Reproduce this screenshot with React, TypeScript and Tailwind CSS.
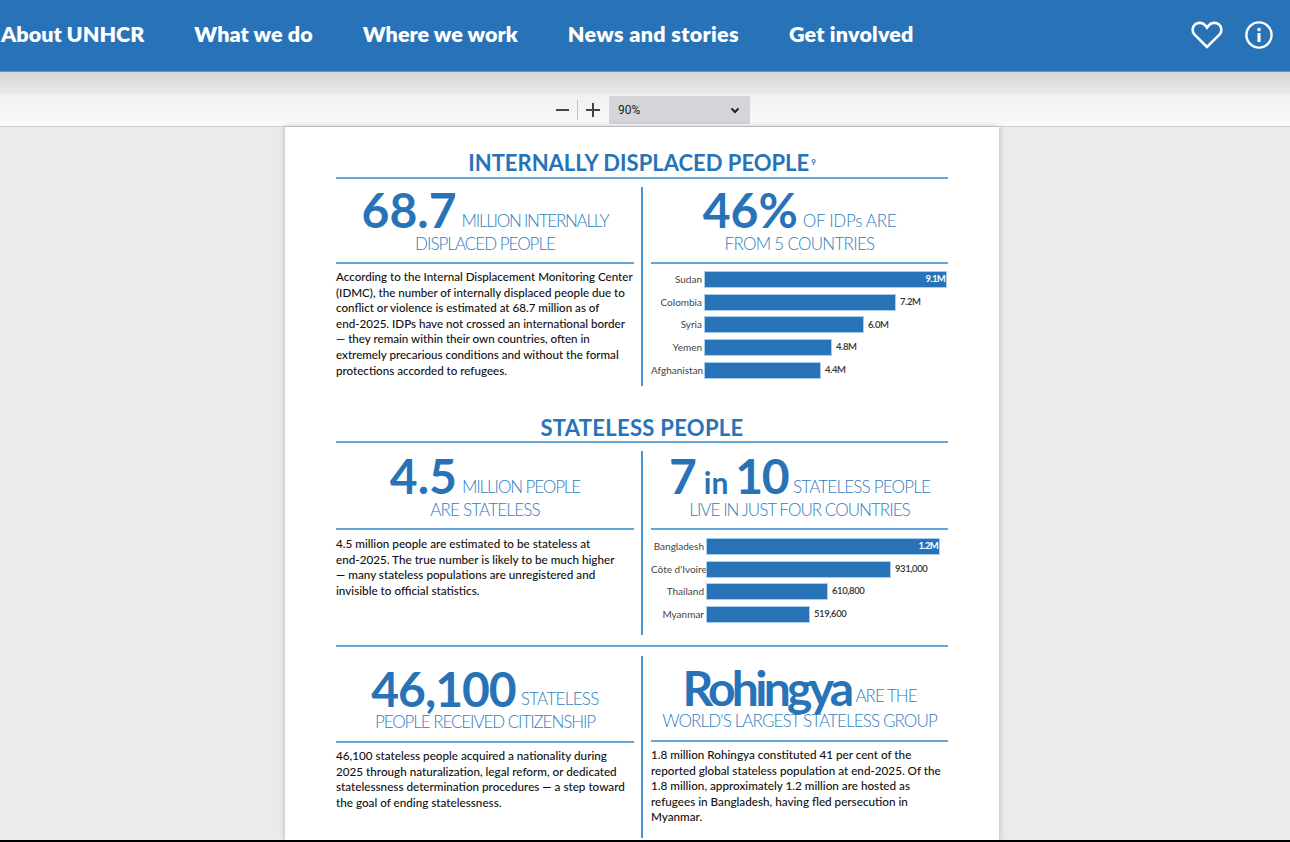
import React from "react";

const navItems = [
  { label: "About UNHCR", cls: "" },
  { label: "What we do", cls: "tracking-[0.1px]" },
  { label: "Where we work", cls: "tracking-[0.05px]" },
  { label: "News and stories", cls: "tracking-[0.34px]" },
  { label: "Get involved", cls: "tracking-[0.2px]" },
];

type Bar = { label: string; value: string; width: number; inside?: boolean };

const idpBars: Bar[] = [
  { label: "Sudan", value: "9.1M", width: 243, inside: true },
  { label: "Colombia", value: "7.2M", width: 192 },
  { label: "Syria", value: "6.0M", width: 160 },
  { label: "Yemen", value: "4.8M", width: 128 },
  { label: "Afghanistan", value: "4.4M", width: 117 },
];

const statelessBars: Bar[] = [
  { label: "Bangladesh", value: "1.2M", width: 234, inside: true },
  { label: "Côte d'Ivoire", value: "931,000", width: 185 },
  { label: "Thailand", value: "610,800", width: 122 },
  { label: "Myanmar", value: "519,600", width: 104 },
];

const Rule = () => <div className="h-[2px] bg-[#64a6d8]" />;

const Title = ({ children, className }: { children: React.ReactNode; className: string }) => (
  <h2 className={`h-[26px] text-center text-[22px] font-bold text-[#2873b8] ${className}`}>{children}</h2>
);

const Stat = ({
  big,
  small,
  line,
  className,
  bigClass = "",
  smallClass,
  lineClass,
}: {
  big: React.ReactNode;
  small: string;
  line: string;
  className: string;
  bigClass?: string;
  smallClass: string;
  lineClass: string;
}) => (
  <div className={`flex flex-col justify-end text-[#2f7dbe] ${className}`}>
    <div className="flex shrink-0 items-baseline justify-center gap-[5px] whitespace-nowrap">
      <span className={`text-[48px] leading-[44px] font-bold text-[#2873b8] ${bigClass}`}>{big}</span>
      <span className={`text-[17px] leading-[20px] font-light ${smallClass}`}>{small}</span>
    </div>
    <div className={`h-[30px] shrink-0 text-center text-[17px] leading-[22px] font-light whitespace-nowrap ${lineClass}`}>
      {line}
    </div>
  </div>
);

const Body = ({ lines, className }: { lines: string[]; className: string }) => (
  <p className={`leading-[15.6px] font-medium whitespace-nowrap text-[#111] ${className}`}>
    {lines.map((l) => (
      <span key={l} className="block">
        {l}
      </span>
    ))}
  </p>
);

const Chart = ({ bars, labelWidth, className }: { bars: Bar[]; labelWidth: string; className: string }) => (
  <div className={`flex flex-col ${className}`}>
    {bars.map((b) => (
      <div key={b.label} className="flex h-[17px] items-center">
        <span className={`text-right text-[10px] whitespace-nowrap text-[#444] ${labelWidth}`}>{b.label}</span>
        <div
          className="ml-[2px] flex h-[17px] items-center justify-end border border-[#a9cfea] bg-[#2873b8] pr-[1px]"
          style={{ width: b.width }}
        >
          {b.inside && <span className="text-[9.5px] font-bold tracking-[-0.7px] text-white">{b.value}</span>}
        </div>
        {!b.inside && <span className="ml-[4px] text-[9.5px] font-semibold tracking-[-0.4px] text-[#333]">{b.value}</span>}
      </div>
    ))}
  </div>
);

const Row = ({ left, right, className }: { left: React.ReactNode; right: React.ReactNode; className: string }) => (
  <div className={`flex ${className}`}>
    <div className="w-[298px]">{left}</div>
    <div className="mx-[7px] w-[2px] bg-[#4a94cf]" />
    <div className="ml-px w-[297px]">{right}</div>
  </div>
);

export default function App() {
  return (
    <div className="flex h-[842px] w-full flex-col overflow-hidden bg-[#ebebed] font-['Lato',sans-serif]">
      <header className="flex h-[72px] shrink-0 items-center border-b border-[#5a9bd2] bg-[#2873b8] pb-px">
        <nav className="mb-[2px] flex flex-1 gap-[50px] pl-px">
          {navItems.map((n) => (
            <a key={n.label} className={`text-[21.5px] font-extrabold whitespace-nowrap text-white ${n.cls}`}>
              {n.label}
            </a>
          ))}
        </nav>
        <div className="flex items-center gap-[22px] pr-[17px]">
          <svg width="32" height="28" viewBox="0 0 32 28" fill="none" stroke="white" strokeWidth="2.6" strokeLinejoin="miter">
            <path d="M16 26 3.6 13.6C.6 10.4 1.2 6 4 3.6 7 1 11.6 1.4 14 4.2L16 6.6l2-2.4c2.4-2.8 7-3.2 10-.6 2.800 2.400 3.400 6.800.4 10z" />
          </svg>
          <svg width="28" height="28" viewBox="0 0 28 28" fill="none">
            <circle cx="14" cy="14" r="12.6" stroke="white" strokeWidth="2.4" />
            <circle cx="14" cy="8.600" r="1.800" fill="white" />
            <rect x="12.500" y="12" width="3" height="9" fill="white" />
          </svg>
        </div>
      </header>

      <div className="flex h-[55px] shrink-0 items-center justify-center border-b border-[#cfcfcf] bg-[linear-gradient(#d6d6d6_0,#e9e9e9_22px,#f0f0f0_22px,#fafafa_100%)] pt-[24px] pb-[2px] pl-[16px]">
        <span className="h-[2px] w-[13px] bg-[#444]" />
        <span className="mx-[8px] h-[20px] w-px bg-[#c4c4c4]" />
        <span className="relative h-[14px] w-[14px]">
          <span className="absolute top-[6px] left-0 h-[2px] w-[14px] bg-[#444]" />
          <span className="absolute top-0 left-[6px] h-[14px] w-[2px] bg-[#444]" />
        </span>
        <div className="ml-[9px] flex h-[28px] w-[141px] items-center justify-between rounded-[2px] bg-[#d5d5d9] pr-[10px] pl-[9px] font-['Roboto',sans-serif] text-[12px] text-[#222]">
          90%
          <svg width="10" height="7" viewBox="0 0 10 7" fill="none" stroke="#222" strokeWidth="2">
            <path d="m1.500 1.500 3.500 3.500 3.500-3.500" />
          </svg>
        </div>
      </div>

      <main className="flex min-h-0 flex-1 justify-center pr-[6px]">
        <article className="h-full w-[714px] bg-white px-[51px] pt-[24px] shadow-[0_0_6px_rgba(0,0,0,0.25)]">
          <Title className="leading-[24px]">
            INTERNALLY DISPLACED PEOPLE<span className="relative -top-[6px] ml-[2px] text-[8px]">9</span>
          </Title>
          <Rule />
          <Row
            className="mt-[8px] h-[199px]"
            left={
              <>
                <Stat
                  className="h-[75px]"
                  big="68.7"
                  small="MILLION INTERNALLY"
                  smallClass="-translate-y-px tracking-[-1.25px]"
                  line="DISPLACED PEOPLE"
                  lineClass="translate-y-px tracking-[-1px]"
                />
                <Rule />
                <Body
                  className="pt-[5px] text-[11.6px]"
                  lines={[
                    "According to the Internal Displacement Monitoring Center",
                    "(IDMC), the number of internally displaced people due to",
                    "conflict or violence is estimated at 68.7 million as of",
                    "end-2025. IDPs have not crossed an international border",
                    "— they remain within their own countries, often in",
                    "extremely precarious conditions and without the formal",
                    "protections accorded to refugees.",
                  ]}
                />
              </>
            }
            right={
              <>
                <Stat
                  className="h-[75px]"
                  big="46%"
                  small="OF IDPs ARE"
                  smallClass="-translate-y-px tracking-[-0.3px]"
                  line="FROM 5 COUNTRIES"
                  lineClass="translate-y-px tracking-[-0.72px]"
                />
                <Rule />
                <Chart className="gap-[5.7px] pt-[7px]" bars={idpBars} labelWidth="w-[51px]" />
              </>
            }
          />

          <div className="mt-[29px]">
            <Title className="leading-[26px] tracking-[0.3px]">STATELESS PEOPLE</Title>
          </div>
          <Rule />
          <Row
            className="mt-[8px] h-[184px]"
            left={
              <>
                <Stat
                  className="h-[77px]"
                  big="4.5"
                  small="MILLION PEOPLE"
                  smallClass="-translate-y-px tracking-[-1.1px]"
                  line="ARE STATELESS"
                  lineClass="translate-y-px tracking-[-0.8px]"
                />
                <Rule />
                <Body
                  className="pt-[6px] text-[11.7px]"
                  lines={[
                    "4.5 million people are estimated to be stateless at",
                    "end-2025. The true number is likely to be much higher",
                    "— many stateless populations are unregistered and",
                    "invisible to official statistics.",
                  ]}
                />
              </>
            }
            right={
              <>
                <Stat
                  className="h-[77px]"
                  big={
                    <>
                      7<span className="mx-[7px] text-[30px] leading-[20px]">in</span>
                      <span className="tracking-[-1.5px]">10</span>
                    </>
                  }
                  small="STATELESS PEOPLE"
                  smallClass="-translate-y-px tracking-[-0.8px]"
                  line="LIVE IN JUST FOUR COUNTRIES"
                  lineClass="translate-y-px tracking-[-0.95px]"
                />
                <Rule />
                <Chart className="gap-[5.5px] pt-[8px]" bars={statelessBars} labelWidth="w-[53px]" />
              </>
            }
          />

          <div className="mt-[10px]">
            <Rule />
          </div>
          <Row
            className="mt-[9px] h-[182px]"
            left={
              <>
                <Stat
                  className="h-[85px]"
                  big="46,100"
                  bigClass="tracking-[-1px]"
                  small="STATELESS"
                  smallClass="-translate-y-[2px] tracking-[-0.67px]"
                  line="PEOPLE RECEIVED CITIZENSHIP"
                  lineClass="tracking-[-1.08px]"
                />
                <Rule />
                <Body
                  className="pt-[5px] text-[11.7px]"
                  lines={[
                    "46,100 stateless people acquired a nationality during",
                    "2025 through naturalization, legal reform, or dedicated",
                    "statelessness determination procedures — a step toward",
                    "the goal of ending statelessness.",
                  ]}
                />
              </>
            }
            right={
              <>
                <Stat
                  className="h-[84px]"
                  big="Rohingya"
                  bigClass="tracking-[-3.7px]"
                  small="ARE THE"
                  smallClass="-translate-y-[4px] tracking-[-0.97px]"
                  line="WORLD'S LARGEST STATELESS GROUP"
                  lineClass="tracking-[-0.88px]"
                />
                <Rule />
                <Body
                  className="pt-[5px] text-[11.7px]"
                  lines={[
                    "1.8 million Rohingya constituted 41 per cent of the",
                    "reported global stateless population at end-2025. Of the",
                    "1.8 million, approximately 1.2 million are hosted as",
                    "refugees in Bangladesh, having fled persecution in",
                    "Myanmar.",
                  ]}
                />
              </>
            }
          />
        </article>
      </main>
      <div className="h-[2px] shrink-0 bg-black" />
    </div>
  );
}
